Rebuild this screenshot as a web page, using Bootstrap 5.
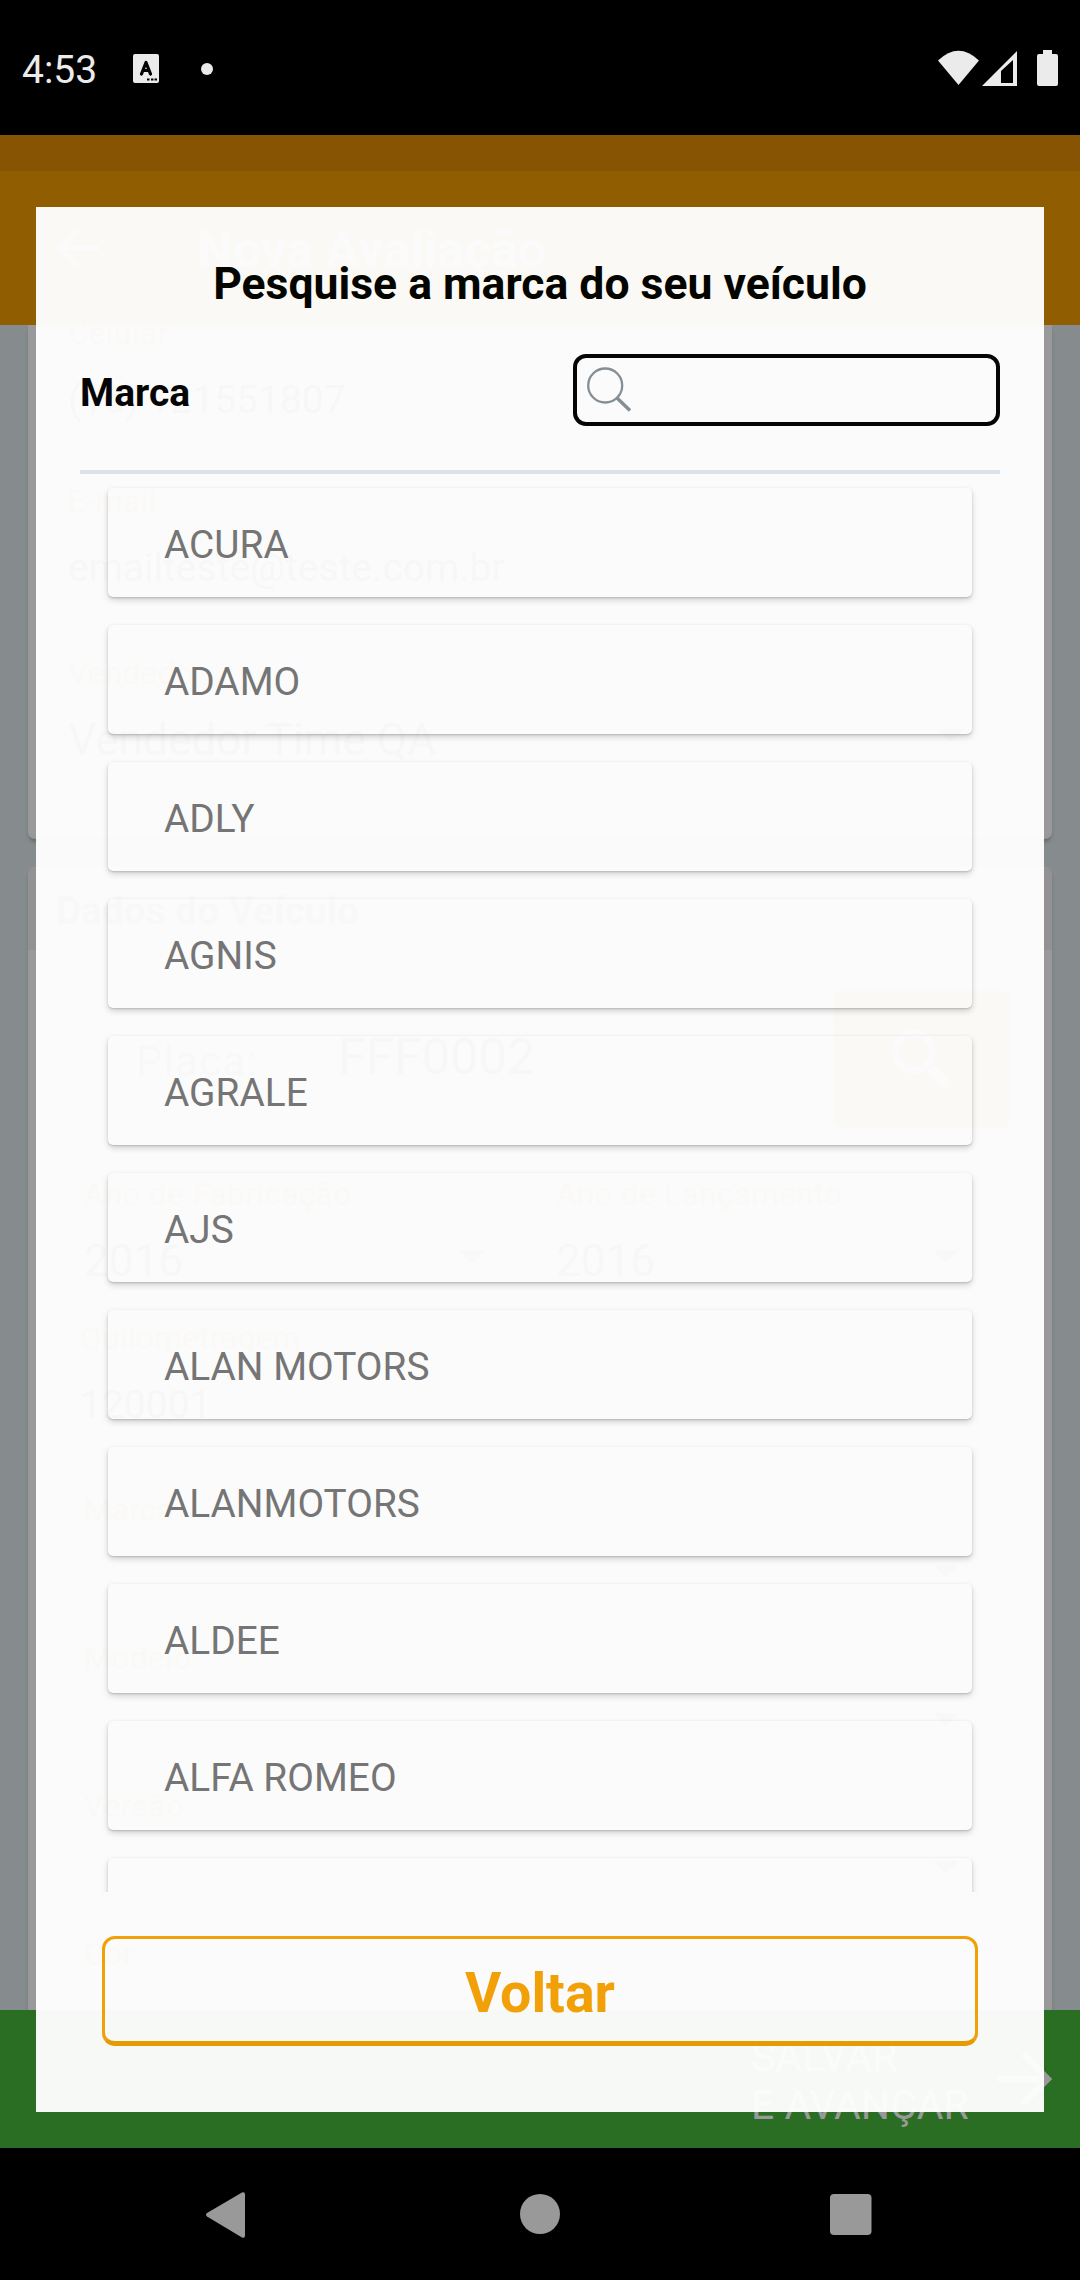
<!DOCTYPE html>
<html lang="pt-BR">
<head>
<meta charset="utf-8">
<meta name="viewport" content="width=device-width, initial-scale=1">
<title>Nova Avaliação</title>
<link href="https://cdn.jsdelivr.net/npm/bootstrap@5.3.0/dist/css/bootstrap.min.css" rel="stylesheet">
<style>
body{font-family:Roboto,"Noto Sans",sans-serif;background:#000;line-height:40px}
.phone{width:1080px;height:2280px}
svg{display:block;flex:none}
/* system bars */
.sys-top{height:135px;padding:0 20px 0 22px;color:#ebebeb}
.clock{font-size:39px;width:111px;padding-top:4px}
.notif-dot{margin-left:42px;margin-top:3px}
.sys-nav{height:132px}
.strip{height:36px;background:#875404}
/* dimmed form page */
.appbar{height:154px;background:#905e00;color:#999;padding-left:55px}
.appbar-title{font-size:50.5px;font-weight:700;margin-left:98px;padding-top:4px}
.scroll-area{height:1685px;background:#868b8d;padding:0 28px}
.sheet{background:#999;box-shadow:0 4px 5px -2px rgba(0,0,0,.35)}
.sheet-a{height:514px;border-radius:0 0 7px 7px;padding:0 40px 0 41px}
.sheet-b{height:1160px;margin-top:28px;border-radius:7px}
.sheet-head{height:83px;line-height:87px;background:#929292;border-radius:7px 7px 0 0;padding-left:28px;font-size:38.8px;font-weight:700;color:#5c5c5c}
.lbl{font-size:31px;letter-spacing:.6px;color:#8a6400;height:40px;text-indent:-1px}
.val{font-size:39px;color:#333;margin-top:26px;padding-bottom:10px;border-bottom:1px solid #777;text-indent:-1px}
.val-lg{font-size:44.200px;padding-bottom:8px}
.caret{width:0;height:0;border:13px solid transparent;border-bottom:0;border-top-color:#4a4a4a;margin-bottom:18px}
.pick{border-bottom:1px solid #777;height:75px}
.pick .caret{margin-bottom:27px}
.plate-row{height:137px;margin:41px 14px 0 43px}
.plate-box{width:252px;border:1px solid #888;border-radius:6px;font-size:42px;letter-spacing:1.2px;color:#5c5c5c;padding-top:4px}
.plate-val{width:484px;margin-left:15px;height:104px;border-bottom:2px solid #777;padding-top:46px;font-size:50.500px;color:#333}
.plate-btn{width:177px;margin-left:11px;border-radius:8px;background:#905e00}
.actions{height:138px;background:#2a6e24;color:#999;font-size:41px;line-height:48px;padding:23px 28px 0 751px}
/* brand picker */
.picker{left:36px;top:207px;width:1008px;height:1905px;background:rgba(255,255,255,.96);padding:31px 44px 0}
.picker-title{font-size:44.5px;font-weight:700;height:90px;line-height:92px;color:#050500}
.search-row{height:72px;margin-top:26px;color:#050505}
.search-row label{font-size:39px;font-weight:700;padding-top:5px}
.search-box{width:427px;height:72px;border:4px solid #050505;border-radius:13px;padding:0 0 3px 9px}
.search-box input{outline:0;box-shadow:none}
.rule{height:4px;background:#dbe3e8;margin-top:44px}
.brands{height:1418px;padding:14px 28px 0;gap:28px;overflow:hidden}
.brand{height:109px;flex:none;border-radius:5px;padding:5px 0 0 56px;font-size:38.8px;color:#757575;background:transparent}
.brand::before{content:"";position:absolute;inset:0;border-radius:5px;box-shadow:0 3px 6px rgba(0,0,0,.17),0 1px 2px rgba(0,0,0,.16)}
.backbtn{height:110px;margin:44px 22px 0;border:3px solid #f1a007;border-bottom:5px solid #e79b02;border-radius:13px;color:#f1a007;font-size:55.5px;font-weight:700;padding:7px 0 0;line-height:1}
</style>
</head>
<body>
<main class="phone position-relative d-flex flex-column overflow-hidden">
  <header class="sys-top d-flex align-items-center">
    <span class="clock">4:53</span>
    <svg width="26" height="30" viewBox="0 0 26 30"><rect width="26" height="29" y="1" rx="2" fill="#ebebeb"/><path d="M8.500 21 13 9.500 17.500 21M10 17.500h6" fill="none" stroke="#000" stroke-width="3.200" stroke-linecap="round" stroke-linejoin="round"/><path d="M14 25.500h2.500v2H14zM18 25.500h2.500v2H18zM21.500 25.500H24v2h-2.500z"/></svg>
    <svg class="notif-dot" width="12" height="12" viewBox="0 0 12 12"><circle cx="6" cy="6" r="6" fill="#ebebeb"/></svg>
    <svg class="ms-auto" width="122" height="38" viewBox="0 0 122 38" fill="#ebebeb"><path d="M0 11.500Q20.500-8 41 11.500L20.500 36Z"/><path fill-rule="evenodd" d="M44 37 79 2v35ZM63 22v12h12V11Z"/><path d="M105 1h9v4h4q2 0 2 2v28q0 2-2 2h-17q-2 0-2-2V7q0-2 2-2h4z"/></svg>
  </header>
  <div class="strip"></div>
  <div class="appbar d-flex align-items-center">
    <svg width="44" height="42" viewBox="0 0 44 42"><path d="M44 21H5M24 2 5 21l19 19" fill="none" stroke="#999" stroke-width="5.500"/></svg>
    <span class="appbar-title">Nova Avaliação</span>
  </div>
  <section class="scroll-area overflow-hidden">
    <div class="sheet sheet-a overflow-hidden">
      <div class="lbl" style="margin-top:-11px">Celular</div>
      <div class="val">(16) 121551807</div>
      <div class="lbl" style="margin-top:51px">E-mail</div>
      <div class="val">emailteste@teste.com.br</div>
      <div class="lbl" style="margin-top:55px">Vendedor</div>
      <div class="val val-lg d-flex justify-content-between align-items-end"><span>Vendedor Time QA</span><i class="caret me-5"></i></div>
    </div>
    <div class="sheet sheet-b overflow-hidden">
      <div class="sheet-head">Dados do Veículo</div>
      <div class="plate-row d-flex">
        <div class="plate-box d-flex align-items-center justify-content-center">Placa:</div>
        <div class="plate-val">FFF0002</div>
        <div class="plate-btn d-flex align-items-center justify-content-center"><svg width="60" height="60" viewBox="0 0 60 60" fill="none" stroke="#999"><circle cx="22" cy="22" r="18.500" stroke-width="7"/><path d="m38 38 18 18" stroke-width="9"/></svg></div>
      </div>
      <div class="d-flex" style="margin:47px 55px 0 41px">
        <div class="w-50"><div class="lbl ps-3">Ano de Fabricação</div><div class="val val-lg ps-3 d-flex justify-content-between align-items-end"><span>2016</span><i class="caret me-5"></i></div></div>
        <div class="w-50"><div class="lbl ps-4">Ano de Lançamento</div><div class="val val-lg ps-4 d-flex justify-content-between align-items-end"><span>2016</span><i class="caret" style="margin-right:38px"></i></div></div>
      </div>
      <div style="margin:29px 52px 0 53px"><div class="lbl">Quilometragem</div><div class="val">120001</div></div>
      <div style="margin:55px 55px 0 41px"><div class="lbl ps-3">Marca</div><div class="pick d-flex justify-content-end align-items-end"><i class="caret" style="margin-right:38px"></i></div></div>
      <div style="margin:33px 55px 0 41px"><div class="lbl ps-3">Modelo</div><div class="pick d-flex justify-content-end align-items-end"><i class="caret" style="margin-right:38px"></i></div></div>
      <div style="margin:33px 55px 0 41px"><div class="lbl ps-3">Versão</div><div class="pick d-flex justify-content-end align-items-end"><i class="caret" style="margin-right:38px"></i></div></div>
      <div style="margin:33px 55px 0 41px"><div class="lbl ps-3">Cor</div></div>
    </div>
  </section>
  <div class="actions d-flex justify-content-between">
    <span class="text-nowrap">SALVAR<br>E AVANÇAR</span>
    <svg width="54" height="56" viewBox="0 0 54 56" style="margin-top:18px"><path d="M0 28h48M25 3l25 25-25 25" fill="none" stroke="#999" stroke-width="6"/></svg>
  </div>
  <nav class="sys-nav">
    <svg width="1080" height="132" viewBox="0 0 1080 132" fill="#999"><path d="M207 68.500q-2-2 0-3.500L242 44.500q3-1 3 2v41q0 3-3 2z"/><circle cx="540" cy="66" r="20"/><rect x="830" y="46" width="41.500" height="41" rx="4"/></svg>
  </nav>

  <section class="picker position-absolute" role="dialog" aria-label="Marca">
    <h1 class="picker-title text-center m-0">Pesquise a marca do seu veículo</h1>
    <div class="search-row d-flex justify-content-between align-items-center">
      <label for="q">Marca</label>
      <div class="search-box d-flex align-items-center">
        <svg width="46" height="46" viewBox="0 0 46 46" fill="none" stroke="#858e95"><circle cx="19.200" cy="19.500" r="17" stroke-width="2.300"/><path d="m31 32 13 12.500" stroke-width="3.500"/></svg>
        <input id="q" class="form-control border-0 bg-transparent p-0 ms-2" type="text">
      </div>
    </div>
    <div class="rule"></div>
    <div class="brands d-flex flex-column">
      <div class="brand position-relative d-flex align-items-center">ACURA</div>
      <div class="brand position-relative d-flex align-items-center">ADAMO</div>
      <div class="brand position-relative d-flex align-items-center">ADLY</div>
      <div class="brand position-relative d-flex align-items-center">AGNIS</div>
      <div class="brand position-relative d-flex align-items-center">AGRALE</div>
      <div class="brand position-relative d-flex align-items-center">AJS</div>
      <div class="brand position-relative d-flex align-items-center">ALAN MOTORS</div>
      <div class="brand position-relative d-flex align-items-center">ALANMOTORS</div>
      <div class="brand position-relative d-flex align-items-center">ALDEE</div>
      <div class="brand position-relative d-flex align-items-center">ALFA ROMEO</div>
      <div class="brand position-relative d-flex align-items-center"></div>
    </div>
    <div class="d-grid"><button type="button" class="btn backbtn">Voltar</button></div>
  </section>
</main>
<script src="https://cdn.jsdelivr.net/npm/bootstrap@5.3.0/dist/js/bootstrap.bundle.min.js"></script>
</body>
</html>
